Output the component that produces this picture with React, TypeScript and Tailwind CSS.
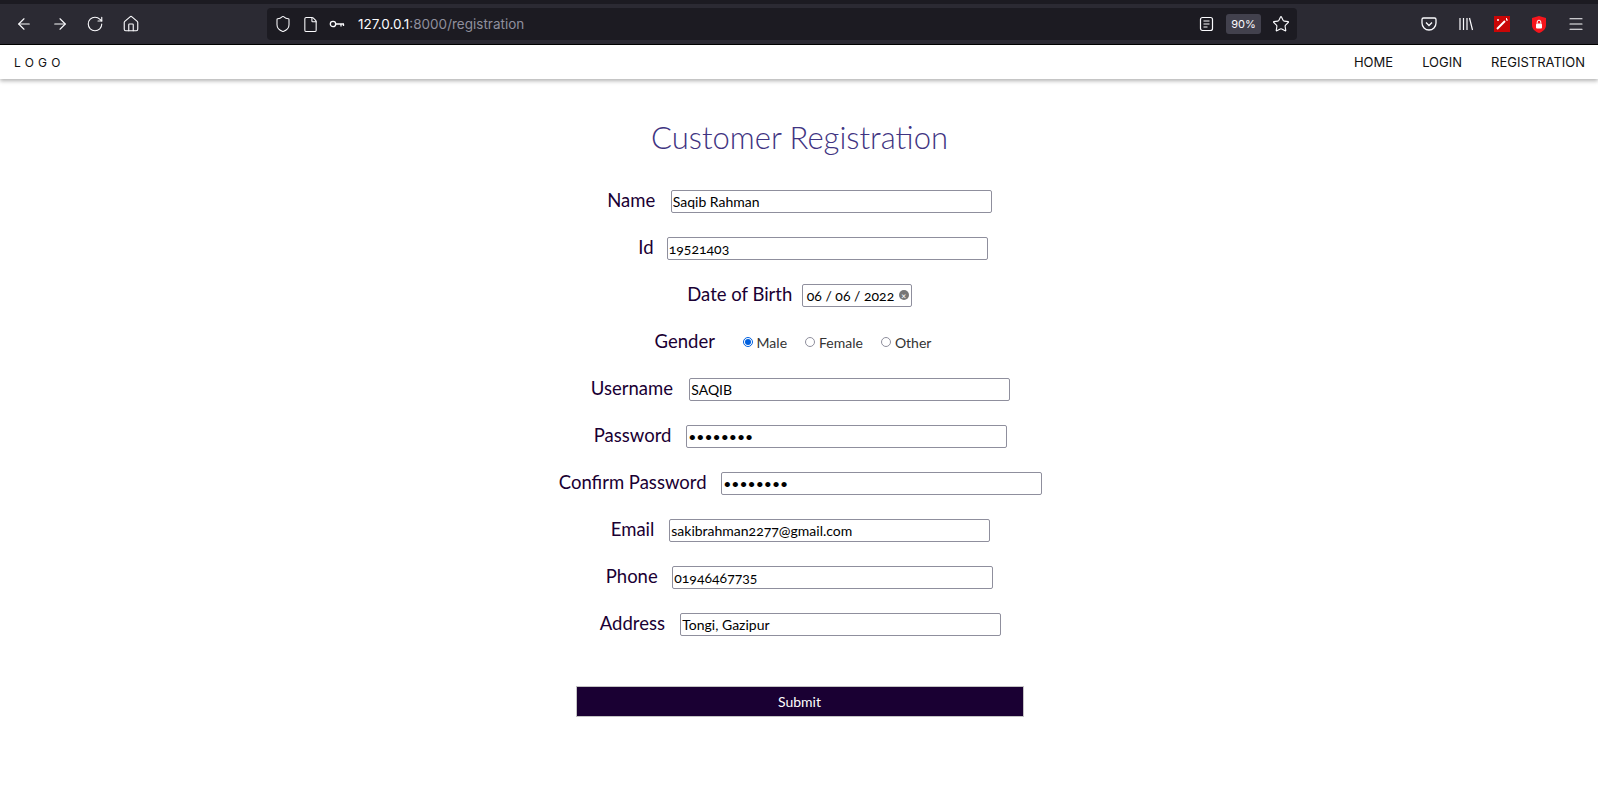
import { ArrowLeft, ArrowRight, RotateCw, Home, Shield, File, Star, Menu } from "lucide-react";

const raleway = "font-['Lato','Noto_Sans',sans-serif]";
const fieldFont = "font-['Lato','Noto_Sans',sans-serif] [font-variant-numeric:oldstyle-nums]";

const fields = [
  { label: "Name", labelWidth: "w-[50px]", value: "Saqib Rahman", type: "text" },
  { label: "Id", labelWidth: "w-[15px]", value: "19521403", type: "text", offset: "pl-[27px]" },
];

const fields2 = [
  { label: "Username", labelWidth: "w-[85px]", value: "SAQIB", type: "text", offset: "pl-[2px]" },
  { label: "Password", labelWidth: "w-[79px]", value: "saqib123", type: "password", offset: "pl-[2px]" },
  { label: "Confirm Password", labelWidth: "w-[149px]", value: "saqib123", type: "password", offset: "pl-[2px]" },
  { label: "Email", labelWidth: "w-[45px]", value: "sakibrahman2277@gmail.com", type: "text", offset: "pl-[2px]" },
  { label: "Phone", labelWidth: "w-[53px]", value: "01946467735", type: "text" },
  { label: "Address", labelWidth: "w-[67px]", value: "Tongi, Gazipur", type: "text", offset: "pl-[2px]" },
];

function BrowserBar() {
  return (
    <div className="h-[45px] bg-[#2b2a33] border-t-[4px] border-t-[#1c1b22] border-b border-b-black flex items-center text-[#fbfbfe] font-['Inter',sans-serif]">
      <div className="flex items-center gap-[17.67px] pl-[15px] w-[267px]">
        <ArrowLeft size={18} strokeWidth={1.5} />
        <ArrowRight size={18} strokeWidth={1.5} />
        <RotateCw size={18} strokeWidth={1.5} />
        <Home size={18} strokeWidth={1.5} />
      </div>
      <div className="w-[1030px] h-[32px] rounded bg-[#1c1b22] flex items-center pl-[7px] pr-[7px]">
        <Shield size={18} strokeWidth={1.4} />
        <File size={17} strokeWidth={1.5} className="ml-[10px]" />
        <svg width="16" height="16" viewBox="0 0 16 16" fill="none" stroke="currentColor" strokeWidth="1.3" className="ml-[10px]">
          <circle cx="4" cy="8" r="2.700" />
          <path d="M6.700 8H15M12 8v2.500M14.500 8v2" />
        </svg>
        <span className="ml-[13px] text-[13.5px]">
          127.0.0.1<span className="text-[#8f8f9d]">:8000/registration</span>
        </span>
        <div className="ml-auto flex items-center">
          <svg width="15" height="16" viewBox="0 0 15 16" fill="none" stroke="currentColor" strokeWidth="1.2">
            <rect x="1.500" y="1.500" width="12" height="13" rx="2" />
            <path d="M4.500 5h6M4.500 8h6M4.500 11h4" />
          </svg>
          <span className="ml-[12px] w-[35px] h-[20px] rounded-[3px] bg-[#42414d] text-[11px] flex items-center justify-center">
            90%
          </span>
          <Star size={18} strokeWidth={1.5} className="ml-[11px]" />
        </div>
      </div>
      <div className="flex items-center ml-auto pr-[13px] gap-[20.500px]">
        <svg width="16" height="16" viewBox="0 0 16 16" fill="none" stroke="currentColor" strokeWidth="1.3">
          <path d="M2.500 2h11A1.500 1.500 0 0 1 15 3.500V7a7 7 0 0 1-14 0V3.500A1.500 1.500 0 0 1 2.500 2z" />
          <path d="M5 6.500 8 9.500l3-3" />
        </svg>
        <svg width="16" height="16" viewBox="0 0 16 16" fill="none" stroke="currentColor" strokeWidth="1.2">
          <path d="M2 2v12M5.500 2v12M9 2v12M11.500 2l3 12" />
        </svg>
        <svg width="16" height="16" viewBox="0 0 16 16">
          <rect width="16" height="16" fill="#c90606" />
          <path d="M3 13 11 5" stroke="#fff" strokeWidth="2" />
          <path d="M12.500 2v2M14 4h-2M4 3v2M3 4h2" stroke="#fff" strokeWidth="1" />
        </svg>
        <svg width="16" height="17" viewBox="0 0 16 17">
          <path d="M8 0 15 2v7c0 4-3 6.500-7 8-4-1.500-7-4-7-8V2z" fill="#f5151c" />
          <rect x="5" y="7.500" width="6" height="5" rx="1" fill="#fff" />
          <path d="M6.200 7.500V6a1.800 1.800 0 0 1 3.600 0v1.500" stroke="#fff" fill="none" />
        </svg>
        <Menu size={18} strokeWidth={1.5} />
      </div>
    </div>
  );
}

function NavBar() {
  return (
    <nav className="h-[34px] bg-white flex items-center justify-between pt-[2px] pl-[14px] pr-[13px] shadow-[0_2px_4px_rgba(0,0,0,0.3)] text-[#111] font-['Inter',sans-serif] relative">
      <span className="text-[12px] tracking-[4.200px]">LOGO</span>
      <div className="flex items-center gap-[29px] text-[13px]">
        <span>HOME</span>
        <span>LOGIN</span>
        <span>REGISTRATION</span>
      </div>
    </nav>
  );
}

function Field({
  label,
  labelWidth,
  value,
  type,
  offset = "",
}: {
  label: string;
  labelWidth: string;
  value: string;
  type: string;
  offset?: string;
}) {
  return (
    <div className={`h-[22px] flex items-center justify-center gap-[13.500px] mb-[25px] ${offset}`}>
      <label className={`${raleway} ${labelWidth} whitespace-nowrap text-[18.500px] text-[#1a0033] -mt-[1px]`}>
        {label}
      </label>
      <input
        type={type}
        defaultValue={value}
        readOnly
        className={`${fieldFont} w-[321px] h-[23px] border border-[#8f8f9d] rounded-[2px] px-[1px] text-[14px] text-black bg-white outline-none`}
      />
    </div>
  );
}

function Radio({ label, checked }: { label: string; checked?: boolean }) {
  return (
    <span className="flex items-center gap-[4px]">
      {checked ? (
        <span className="w-[10px] h-[10px] rounded-full border-[1.500px] border-[#0060df] flex items-center justify-center">
          <span className="w-[6px] h-[6px] rounded-full bg-[#0060df]" />
        </span>
      ) : (
        <span className="w-[10px] h-[10px] rounded-full border border-[#8f8f9d]" />
      )}
      <span className="text-[14px] text-[#333]">{label}</span>
    </span>
  );
}

export default function App() {
  return (
    <div className="min-h-[796px] bg-white overflow-hidden">
      <BrowserBar />
      <NavBar />
      <main className="flex flex-col items-stretch pl-[1px]">
        <h1 className={`${raleway} text-[31px] font-light text-[#3f3482] text-center mt-[40px] mb-[35px] leading-[36px]`}>
          Customer Registration
        </h1>
        {fields.map((f) => (
          <Field key={f.label} {...f} />
        ))}
        <div className="h-[22px] flex items-center justify-center gap-[12.500px] mb-[25px]">
          <label className={`${raleway} w-[102px] whitespace-nowrap text-[18.500px] text-[#1a0033] -mt-[1px]`}>Date of Birth</label>
          <div className={`${fieldFont} w-[110px] h-[23px] border border-[#8f8f9d] rounded-[2px] flex items-center pl-[4px] pr-[2px] text-[14px] text-black`}>
            <span>06 / 06 / 2022</span>
            <span className="ml-auto w-[10px] h-[10px] rounded-full bg-[#777] text-white flex items-center justify-center text-[9px] leading-none">
              ×
            </span>
          </div>
        </div>
        <div className="h-[22px] flex items-center justify-center mb-[25px] pr-[13px]">
          <label className={`${raleway} w-[61px] whitespace-nowrap text-[18.500px] text-[#1a0033] -mt-[1px] mr-[27px]`}>Gender</label>
          <div className={`${fieldFont} flex items-center gap-[18px]`}>
            <Radio label="Male" checked />
            <Radio label="Female" />
            <Radio label="Other" />
          </div>
        </div>
        {fields2.map((f) => (
          <Field key={f.label} {...f} />
        ))}
        <button className={`${raleway} self-center w-[448px] h-[31px] mt-[26px] bg-[#1a0033] border border-[#c4c4c4] text-white text-[14px]`}>
          Submit
        </button>
      </main>
    </div>
  );
}
